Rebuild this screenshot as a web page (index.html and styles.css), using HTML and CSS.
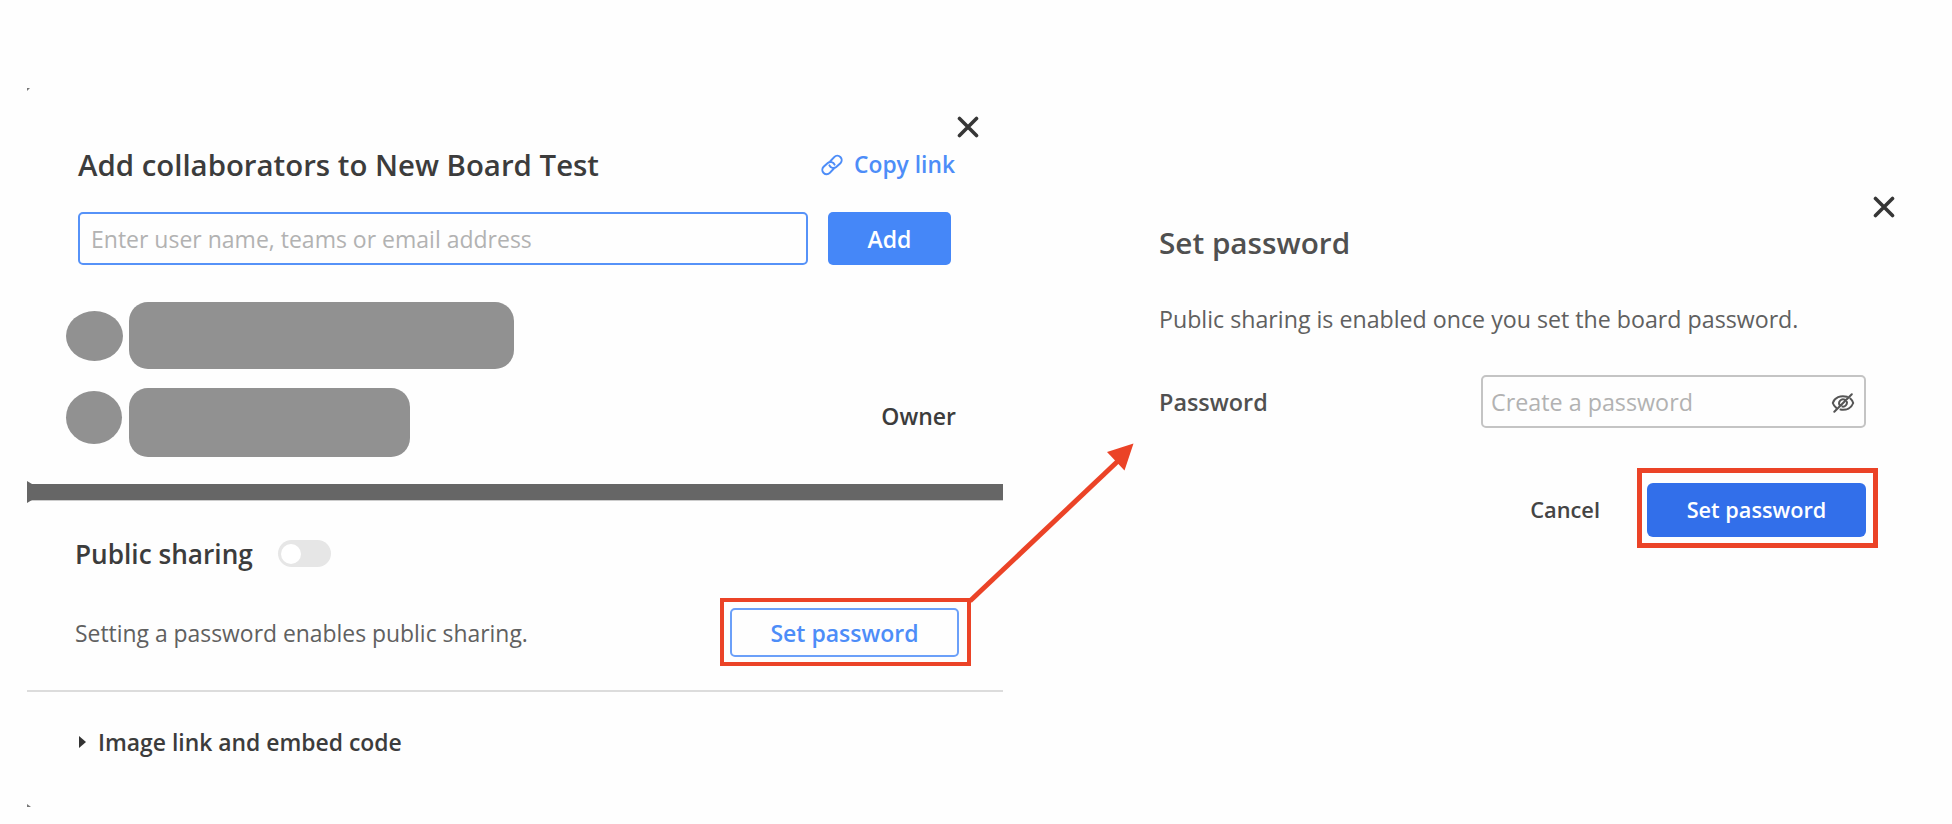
FILE: index.html
```html
<!DOCTYPE html>
<html lang="en">

<head>
    <meta charset="UTF-8">
    <meta name="viewport" content="width=device-width, initial-scale=1.0">
    <title>Set password</title>
    <link rel="stylesheet" href="styles.css">
</head>

<body>
    <div class="page">
        <!-- Share dialog -->
        <div class="share">
            <div class="share-top">
                <div class="share-close">
                    <svg class="close-icon" viewBox="0 0 22 22"><path d="M2.5 2.5L19.5 19.5M19.5 2.5L2.5 19.5" /></svg>
                </div>
                <div class="title-row">
                    <h2 class="title">Add collaborators to New Board Test</h2>
                    <a class="copy-link">
                        <svg class="link-icon" viewBox="0 0 22 22">
                            <path d="M9.3 7.2L13.200 3.100A4.300 4.300 0 0 1 19.400 9.200L15.200 13A4.400 4.400 0 0 1 8.400 11.400" />
                            <path d="M12.700 14.800L8.800 18.900A4.300 4.300 0 0 1 2.600 12.800L6.800 9A4.400 4.400 0 0 1 13.600 10.600" />
                        </svg>
                        <span>Copy link</span>
                    </a>
                </div>
                <div class="add-row">
                    <input class="user-input" type="text" placeholder="Enter user name, teams or email address">
                    <button class="add-button">Add</button>
                </div>
                <div class="member">
                    <span class="avatar"></span>
                    <span class="name"></span>
                </div>
                <div class="member owner">
                    <span class="avatar"></span>
                    <span class="name"></span>
                    <span class="role">Owner</span>
                </div>
                <svg class="corner corner-tl" viewBox="0 0 5 4"><path d="M0 0H3L0 3Z" /></svg>
            </div>

            <div class="divider-bar"></div>

            <div class="share-bottom">
                <div class="public-row">
                    <h3 class="subtitle">Public sharing</h3>
                    <span class="toggle"></span>
                </div>
                <div class="setting-row">
                    <p class="text">Setting a password enables public sharing.</p>
                    <div class="highlight">
                        <button class="outline-button">Set password</button>
                    </div>
                </div>
            </div>

            <div class="embed">
                <svg class="arrow-icon" viewBox="0 0 7 12"><path d="M0 0L7 6L0 12Z" /></svg>
                <span>Image link and embed code</span>
                <svg class="corner corner-bl" viewBox="0 0 5 4"><path d="M0 0L4 3H0Z" /></svg>
            </div>
        </div>

        <!-- Password dialog -->
        <div class="password">
            <div class="password-close">
                <svg class="close-icon" viewBox="0 0 22 22"><path d="M2.5 2.5L19.5 19.5M19.5 2.5L2.5 19.5" /></svg>
            </div>
            <h2 class="password-title">Set password</h2>
            <p class="password-text">Public sharing is enabled once you set the board password.</p>
            <div class="password-row">
                <label class="label" for="boardPassword">Password</label>
                <div class="password-field">
                    <input id="boardPassword" class="password-input" type="text" placeholder="Create a password">
                    <svg class="eye-icon" viewBox="0 0 24 20">
                        <path d="M16 3.800C9.500 1.800 3.500 4.800 1.800 10C2.500 12 3.700 13.700 5.300 14.900M19.300 5.600C20.700 6.800 21.700 8.300 22.200 10C20.500 15 15.500 17.500 9.500 16.600" />
                        <path d="M13.800 6.600A4 4 0 0 0 8.700 12.300M15.900 9A4 4 0 0 1 11.500 13.600M20.800 1.200L3.300 18.800" />
                    </svg>
                </div>
            </div>
            <div class="actions">
                <span class="cancel">Cancel</span>
                <div class="highlight-big">
                    <button class="submit-button">Set password</button>
                </div>
            </div>
        </div>

        <!-- Arrow between the two dialogs -->
        <svg class="arrow" viewBox="0 0 170 164">
            <path class="arrow-line" d="M2 158L150 18" />
            <path class="arrow-head" d="M165.500 0.500L139 9L156.500 27.500Z" />
        </svg>
    </div>
</body>

</html>
```
FILE: styles.css
```css
* {
    box-sizing: border-box;
}

body {
    margin: 0;
    background-color: #fefefe;
    font-family: "Open Sans", "Noto Sans", sans-serif;
    font-size: 23px;
    color: #3c3c3c;
}

h2,
h3,
p {
    margin: 0;
}

input,
button {
    font-family: inherit;
    font-size: 23px;
    outline: none;
}

input {
    color: #3c3c3c;
    background-color: #fefefe;
}

input::placeholder {
    color: #b2b2b2;
    opacity: 1;
}

.page {
    position: relative;
    display: flex;
    height: 824px;
    overflow: hidden;
    padding-left: 27px;
}

.share {
    width: 976px;
}

.share-top {
    position: relative;
    height: 484px;
    padding: 116px 24px 0 51px;
}

.share-close {
    display: flex;
    justify-content: flex-end;
    height: 29px;
}

.close-icon {
    width: 22px;
    height: 22px;
    fill: none;
    stroke: #363636;
    stroke-width: 3.6;
    stroke-linecap: round;
}

.title-row {
    display: flex;
    justify-content: space-between;
    align-items: center;
    height: 40px;
    padding-right: 24px;
}

.title {
    font-size: 29.4px;
    font-weight: 600;
    line-height: 40px;
}

.copy-link {
    display: flex;
    align-items: center;
    gap: 11px;
    font-weight: 600;
    font-size: 22.8px;
    line-height: 40px;
    color: #4d8df8;
}

.link-icon {
    width: 22px;
    height: 22px;
    fill: none;
    stroke: #4d8df8;
    stroke-width: 2;
    stroke-linecap: round;
}

.add-row {
    display: flex;
    gap: 20px;
    margin-top: 27px;
    height: 53px;
}

.user-input {
    width: 730px;
    padding: 0 11px;
    border: 2px solid #5692f8;
    border-radius: 5px;
}

.add-button {
    width: 123px;
    border: none;
    border-radius: 5px;
    background-color: #4587f8;
    color: #fff;
    font-weight: 600;
}

.member {
    display: flex;
    align-items: center;
    gap: 6px;
    height: 67px;
    margin: 37px 0 0 -12px;
}

.avatar {
    width: 57px;
    height: 50px;
    border-radius: 50%;
    background-color: #919191;
}

.name {
    width: 385px;
    height: 67px;
    border-radius: 19px;
    background-color: #919191;
}

.owner {
    height: 69px;
    margin-top: 18.5px;
}

.owner .avatar {
    width: 56px;
    height: 53px;
    margin: 0 1px 9px 0;
}

.owner .name {
    width: 281px;
    height: 69px;
}

.role {
    margin: 0 23px 12px auto;
    font-weight: 600;
}

.divider-bar {
    height: 17px;
    background-color: #666;
    border-bottom: 1px solid #ccc;
}

/* The dialog's rounded corners leave small dark tips beside the bar */
.divider-bar::before {
    content: "";
    display: block;
    position: relative;
    top: -3px;
    width: 5px;
    height: 22px;
    background-color: #666;
    clip-path: polygon(0 0, 100% 3px, 100% 19px, 0 100%);
}

.share-bottom {
    height: 191px;
    padding: 33px 32px 0 48px;
    border-bottom: 2px solid #dcdcdc;
}

.public-row {
    display: flex;
    align-items: center;
    gap: 25px;
    height: 40px;
}

.subtitle {
    font-size: 26.2px;
    font-weight: 600;
    line-height: 40px;
}

.toggle {
    width: 53px;
    height: 27px;
    margin-bottom: 1px;
    padding: 3.5px;
    border-radius: 14px;
    background-color: #e6e6e6;
}

.toggle::before {
    content: "";
    display: block;
    width: 20px;
    height: 20px;
    border-radius: 50%;
    background-color: #fff;
}

.setting-row {
    display: flex;
    justify-content: space-between;
    align-items: center;
    height: 68px;
    margin-top: 24px;
}

.text {
    padding-top: 2px;
    font-size: 22.9px;
    color: #606060;
}

.highlight {
    width: 251px;
    height: 68px;
    padding: 6px 8px 5px 6px;
    border: 4px solid #eb4327;
}

.outline-button {
    width: 229px;
    height: 49px;
    border: 2px solid #6ba0f9;
    border-radius: 5px;
    background-color: #fefefe;
    color: #4d8df8;
    font-weight: 600;
}

.embed {
    position: relative;
    display: flex;
    align-items: center;
    gap: 12px;
    height: 117px;
    padding: 0 0 17px 52px;
    font-size: 22.9px;
    font-weight: 600;
}

.arrow-icon {
    width: 7px;
    height: 12px;
    fill: #333;
}

.corner {
    position: absolute;
    left: 0;
    width: 5px;
    height: 4px;
    fill: #777;
}

.corner-tl {
    top: 88px;
}

.corner-bl {
    bottom: 1px;
}

.password {
    width: 920px;
    padding: 196px 0 0 156px;
}

.password-close {
    display: flex;
    justify-content: flex-end;
    height: 27px;
    padding-right: 28px;
}

.password-title {
    height: 40px;
    font-size: 29.7px;
    font-weight: 600;
    line-height: 40px;
    color: #505050;
}

.password-text {
    margin-top: 36px;
    font-size: 23.2px;
    line-height: 40px;
    color: #606060;
}

.password-row {
    display: flex;
    justify-content: space-between;
    align-items: center;
    height: 53px;
    margin-top: 36px;
    padding-right: 57px;
}

.label {
    font-size: 23.4px;
    font-weight: 600;
    color: #505050;
}

.password-field {
    position: relative;
    width: 385px;
    height: 53px;
}

.password-input {
    width: 100%;
    height: 100%;
    padding: 0 50px 0 8px;
    border: 2px solid #c4c4c4;
    border-radius: 5px;
    font-size: 23.3px;
}

.eye-icon {
    position: absolute;
    top: 18px;
    right: 11px;
    width: 24px;
    height: 20px;
    fill: none;
    stroke: #555;
    stroke-width: 2;
    stroke-linecap: round;
}

.actions {
    display: flex;
    justify-content: flex-end;
    align-items: center;
    gap: 37px;
    height: 80px;
    margin-top: 40px;
    padding-right: 45px;
}

.cancel {
    margin-top: 3px;
    font-size: 21.8px;
    font-weight: 600;
    color: #444;
}

.highlight-big {
    width: 241px;
    height: 80px;
    padding: 10px 7px 6px 5px;
    border: 5px solid #eb4327;
}

.submit-button {
    width: 219px;
    height: 54px;
    padding-bottom: 2px;
    border: none;
    border-radius: 6px;
    background-color: #326fea;
    color: #fff;
    font-size: 21.7px;
    font-weight: 600;
}

.arrow {
    position: absolute;
    top: 443px;
    left: 968px;
    width: 170px;
    height: 164px;
}

.arrow-line {
    fill: none;
    stroke: #eb4327;
    stroke-width: 5;
}

.arrow-head {
    fill: #eb4327;
}
```
